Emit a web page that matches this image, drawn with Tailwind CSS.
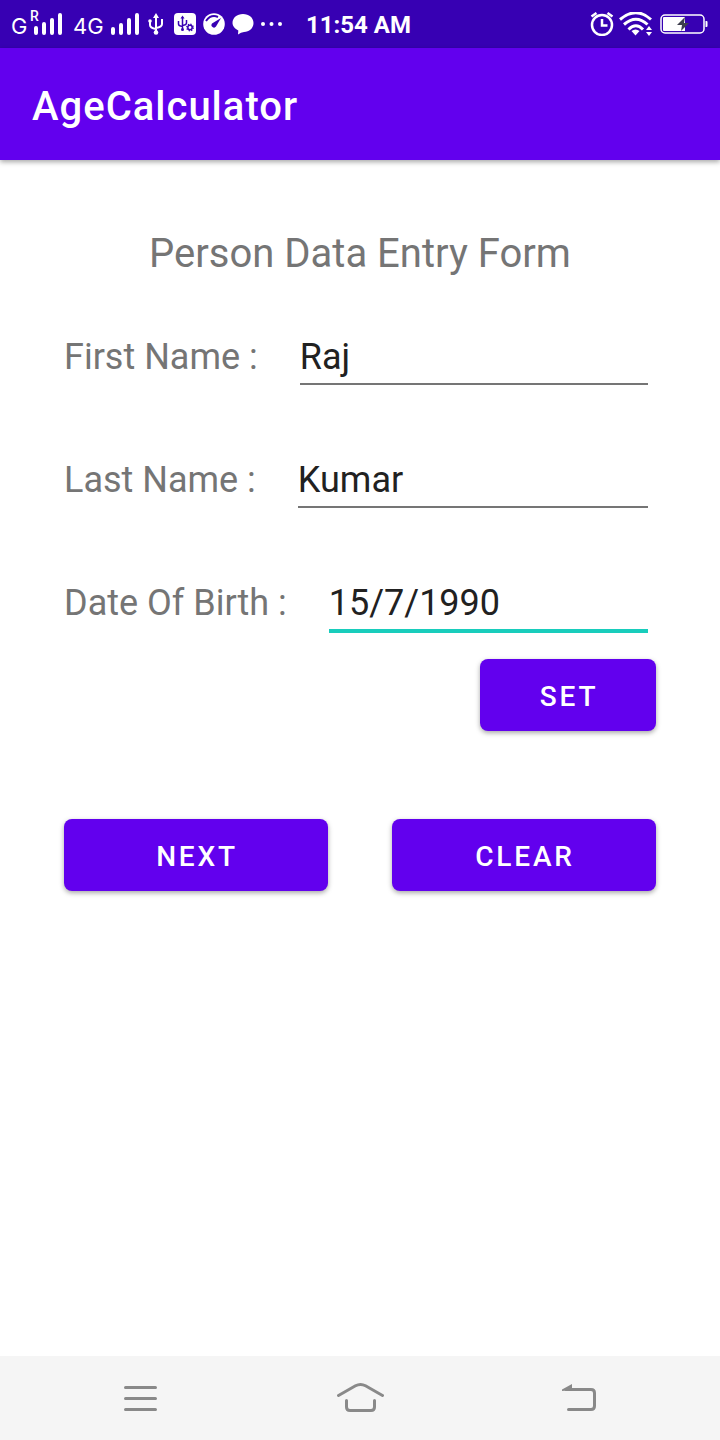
<!DOCTYPE html>
<html lang="en">
<head>
<meta charset="utf-8">
<meta name="viewport" content="width=device-width, initial-scale=1">
<title>AgeCalculator</title>
<script src="https://cdn.jsdelivr.net/npm/@tailwindcss/browser@4"></script>
</head>
<body class="flex min-h-screen flex-col bg-white font-[Roboto,sans-serif] text-[#757575]">

<!-- Status bar -->
<div class="flex h-12 items-center justify-between bg-[#3700b3] pr-3 pl-[11px] text-white">
  <div class="flex items-center">
    <div class="relative flex w-[62px] items-center">
      <span class="pt-1 text-[22px] leading-6 font-[Inter,sans-serif]">G</span>
      <span class="absolute -top-0.5 left-[19px] text-sm leading-4 font-medium">R</span>
      <svg class="absolute left-[23px] h-6 w-7" viewBox="0 0 28 24" fill="none" stroke="#fff" stroke-width="4" stroke-linecap="round"><path d="M2 16v5M10 12v9M18 8v13M26 3v18"/></svg>
    </div>
    <div class="flex w-[75px] items-center gap-[7px]">
      <span class="pt-1 text-[22px] leading-6 font-[Inter,sans-serif]">4G</span>
      <svg class="h-6 w-7 shrink-0" viewBox="0 0 28 24" fill="none" stroke="#fff" stroke-width="4" stroke-linecap="round"><path d="M2 17v4M10 13v8M18 8v13M26 3v18"/></svg>
    </div>
    <div class="flex items-center gap-[7px]">
      <svg class="h-6 w-4" viewBox="0 0 16 24" fill="none" stroke="#fff" stroke-width="2"><path d="M8 19V5M2 9v4q0 3 6 4M14 8v4q0 3-6 4"/><path d="M8 1l3 5H5zM13 7h2v2h-2z" fill="#fff" stroke="none"/><circle cx="8" cy="20.500" r="2.300" fill="#fff" stroke="none"/><circle cx="2" cy="9" r="1.800" fill="#fff" stroke="none"/></svg>
      <svg class="ml-[3px] h-[22px] w-[22px]" viewBox="0 0 22 22"><rect width="22" height="22" rx="4" fill="#fff"/><g fill="none" stroke="#3700b3" stroke-width="1.500"><path d="M8.500 16V4M4.500 8v3q0 2 4 2.500M12.500 7v3q0 2-4 2.500"/><path d="M8.500 2.500l2 3h-4z" fill="#3700b3" stroke="none"/><circle cx="8.500" cy="16.500" r="1.500" fill="#3700b3" stroke="none"/><circle cx="16" cy="14.500" r="4.200" fill="#fff" stroke="none"/><circle cx="16" cy="14.500" r="2.200"/><circle cx="16" cy="14.500" r="3.200" stroke-width="1.400" stroke-dasharray="1.300 1.210"/></g></svg>
      <svg class="h-[22px] w-[22px]" viewBox="0 0 22 22"><circle cx="11" cy="11" r="10.800" fill="#fff"/><path d="M3 8Q8 1 15 4" fill="none" stroke="#3700b3" stroke-width="2"/><path d="M18 5l-5 8.500a2.500 2.500 0 0 1-4-3z" fill="#3700b3"/></svg>
      <svg class="h-[22px] w-[22px]" viewBox="0 0 22 22"><path d="M11 1c6 0 10.500 3.800 10.500 9S17 19 12 19q-3 .3-6 2.500l.300-4C3 16 .500 13 .500 10 .500 4.800 5 1 11 1z" fill="#fff"/></svg>
      <svg class="h-4 w-[22px]" viewBox="0 0 22 16" fill="#fff"><circle cx="2" cy="8" r="2"/><circle cx="10.500" cy="8" r="2"/><circle cx="19" cy="8" r="2"/></svg>
    </div>
    <span class="ml-[23px] pt-0.5 text-2xl font-bold">11:54 AM</span>
  </div>
  <div class="flex items-center">
    <svg class="h-6 w-6" viewBox="0 0 24 24" fill="none" stroke="#fff" stroke-width="2.500"><circle cx="12" cy="13" r="10"/><path d="M12 7v6.500h5.500M1.500 4.500l5-3.500M22.500 4.500l-5-3.500"/></svg>
    <svg class="ml-[5px] h-6 w-[34px]" viewBox="0 0 34 24" fill="none" stroke="#fff" stroke-width="3"><path d="M1 7.500Q17-6 32 7.500M5 12.500Q17 2 28.500 12.500M9.500 17.500Q17 10 24 17.500"/><path d="M12.500 19q4-3 8 0l-4 4.500zM27 18h6l-3-4zM27 20h6l-3 4z" fill="#fff" stroke="none"/></svg>
    <svg class="ml-[7px] h-5 w-12" viewBox="0 0 48 20"><rect x="1" y="1" width="43" height="18" rx="4" fill="none" stroke="#fff" stroke-width="1.500"/><path d="M4 3h21v14H4q-1 0-1-1V4q0-1 1-1z" fill="#fff"/><path d="M25 3l-8 8h5l-1 6 8-8h-5z" fill="#3d3d4d"/><path d="M45.500 7h1q1 0 1 1v4q0 1-1 1h-1z" fill="#fff"/></svg>
  </div>
</div>

<!-- App bar -->
<header class="flex h-28 items-center bg-[#6200ee] px-8 pt-1.5 shadow-[0_2px_5px_rgba(0,0,0,0.35)]">
  <h1 class="text-[40px] leading-[48px] font-medium tracking-wide text-white">AgeCalculator</h1>
</header>

<!-- Form -->
<main class="grow px-16 pt-[70px]">
  <form>
    <h2 class="text-center text-[40px] leading-[48px]">Person Data Entry Form</h2>
    <div class="mt-[47px] mr-2 flex gap-[42px]">
      <label for="first" class="pt-3 text-4xl leading-10">First Name :</label>
      <input id="first" type="text" value="Raj" class="h-[60px] min-w-0 flex-1 border-b-2 border-[#757575] pt-1.5 text-4xl leading-10 text-[#212121] outline-none">
    </div>
    <div class="mt-[63px] mr-2 flex gap-[42px]">
      <label for="last" class="pt-3 text-4xl leading-10">Last Name :</label>
      <input id="last" type="text" value="Kumar" class="h-[60px] min-w-0 flex-1 border-b-2 border-[#757575] pt-1.5 text-4xl leading-10 text-[#212121] outline-none">
    </div>
    <div class="mt-[63px] mr-2 flex gap-[42px]">
      <label for="dob" class="pt-3 text-4xl leading-10">Date Of Birth :</label>
      <input id="dob" type="text" value="15/7/1990" class="h-[62px] min-w-0 flex-1 border-b-4 border-[#18cdbc] pt-1.5 text-4xl leading-10 text-[#212121] outline-none">
    </div>
    <div class="mt-[26px] flex justify-end">
      <button type="button" class="h-[72px] w-44 rounded-lg bg-[#6200ee] pt-1 pl-0.5 text-[28px] font-medium tracking-widest text-white shadow-[0_2px_5px_rgba(0,0,0,0.35)]">SET</button>
    </div>
    <div class="mt-[88px] grid grid-cols-2 gap-16">
      <button type="button" class="h-[72px] rounded-lg bg-[#6200ee] pt-1 pl-0.5 text-[28px] font-medium tracking-widest text-white shadow-[0_2px_5px_rgba(0,0,0,0.35)]">NEXT</button>
      <button type="button" class="h-[72px] rounded-lg bg-[#6200ee] pt-1 pl-0.5 text-[28px] font-medium tracking-widest text-white shadow-[0_2px_5px_rgba(0,0,0,0.35)]">CLEAR</button>
    </div>
  </form>
</main>

<!-- System navigation -->
<nav class="grid h-[84px] grid-cols-3 items-center bg-[#f5f5f5] px-[30px]" aria-label="System">
  <button type="button" aria-label="Recent apps" class="flex justify-center"><svg class="h-9 w-12" viewBox="0 0 48 36" fill="none" stroke="#898989" stroke-width="3" stroke-linecap="round"><path d="M9.500 7.500h30M9.500 18.500h30M9.500 29.500h30"/></svg></button>
  <button type="button" aria-label="Home" class="flex justify-center"><svg class="h-9 w-12" viewBox="0 0 48 36" fill="none" stroke="#898989" stroke-width="3" stroke-linecap="round" stroke-linejoin="round"><path d="M2.500 15.500L19.500 5.800Q24.500 3 29.500 5.800L46.500 15.500M10.500 20.500V27q0 3.500 3.500 3.500h21Q38.500 30.500 38.500 27v-6.500"/></svg></button>
  <button type="button" aria-label="Back" class="flex justify-center"><svg class="h-9 w-12" viewBox="0 0 48 36" fill="none" stroke="#898989" stroke-width="3" stroke-linecap="round"><path d="M10 9.500h25q3.500 0 3.500 3.500v13q0 3.500-3.500 3.500H12.500"/><path d="M6 11V9.500L16 4v6z" fill="#898989" stroke="none"/></svg></button>
</nav>
</body>
</html>
